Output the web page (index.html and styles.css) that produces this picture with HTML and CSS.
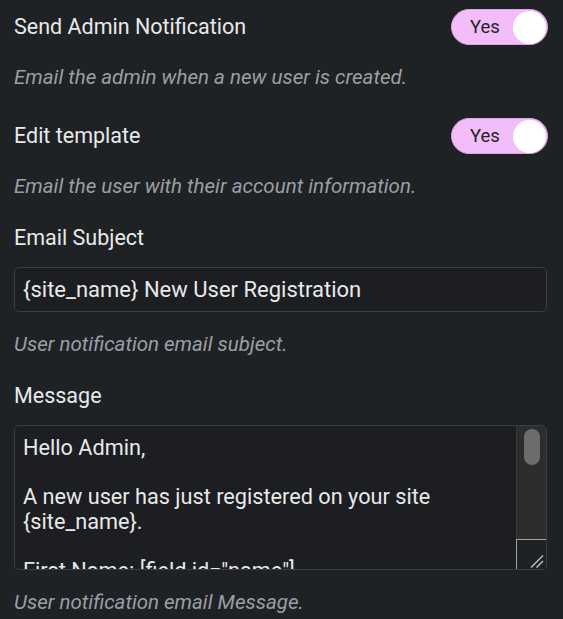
FILE: index.html
```html
<!DOCTYPE html>
<html lang="en">
<head>
    <meta charset="UTF-8">
    <title>User notification settings</title>
    <link rel="stylesheet" href="styles.css">
</head>
<body>

<div class="settings">
    <div class="field">
        <div class="field-row">
            <span class="field-label">Send Admin Notification</span>
            <label class="toggle">
                <span class="toggle-text">Yes</span>
                <span class="toggle-knob"></span>
            </label>
        </div>
        <p class="field-desc">Email the admin when a new user is created.</p>
    </div>

    <div class="field">
        <div class="field-row">
            <span class="field-label">Edit template</span>
            <label class="toggle">
                <span class="toggle-text">Yes</span>
                <span class="toggle-knob"></span>
            </label>
        </div>
        <p class="field-desc">Email the user with their account information.</p>
    </div>

    <div class="field">
        <label class="field-label block" for="subject">Email Subject</label>
        <input type="text" id="subject" class="text-input" value="{site_name} New User Registration">
        <p class="field-desc">User notification email subject.</p>
    </div>

    <div class="field">
        <label class="field-label block" for="message">Message</label>
        <div class="message-box">
            <textarea id="message" class="message-text">Hello Admin,

A new user has just registered on your site {site_name}.

First Name: [field id="name"]
Last Name: [field id="last_name"]
Email: [field id="email"]
Username: [field id="username"]

Please review the user role and details at 'Users' menu in your WP dashboard.

Thank You</textarea>
            <div class="scrollbar">
                <span class="scroll-thumb"></span>
                <span class="scroll-corner">
                    <svg width="14" height="14" viewBox="0 0 14 14">
                        <path d="M1 13.5 L13 1.5 M6.5 13.5 L13 7" stroke="#b3b3b3" stroke-width="1.6" fill="none"/>
                    </svg>
                </span>
            </div>
        </div>
        <p class="field-desc">User notification email Message.</p>
    </div>
</div>

</body>
</html>
```

FILE: styles.css
```css
body {
    margin: 0;
    background-color: #1f2225;
    font-family: Roboto, "Liberation Sans", sans-serif;
    color: #e8e9ea;
}

.settings {
    padding: 9px 16px 0 14px;
}

.field {
    margin-bottom: 30.5px;
}

.field-row {
    display: flex;
    align-items: center;
    justify-content: space-between;
    height: 36px;
}

.field-label {
    font-size: 21.5px;
    line-height: 22px;
}

.field-label.block {
    display: block;
    margin-bottom: 18px;
}

.field-desc {
    margin: 20.5px 0 0;
    font-size: 20.5px;
    line-height: 22px;
    font-style: italic;
    color: #9a9fa5;
}

.toggle {
    display: flex;
    align-items: center;
    justify-content: space-between;
    box-sizing: border-box;
    width: 97px;
    height: 36px;
    margin-right: -1px;
    padding: 0 1px 0 18px;
    background-color: #f3bdfa;
    border: 1px solid #dca6e4;
    border-radius: 18px;
    cursor: pointer;
}

.toggle-text {
    font-size: 18.5px;
    color: #232326;
}

.toggle-knob {
    width: 33px;
    height: 33px;
    border-radius: 50%;
    background-color: #fff;
}

.text-input {
    display: block;
    box-sizing: border-box;
    width: 100%;
    height: 45px;
    margin: 0;
    padding: 10px 8px;
    background-color: #1c1e21;
    border: 1px solid #3a3d41;
    border-radius: 5px;
    font-family: inherit;
    font-size: 22px;
    line-height: 24px;
    color: #e8e9ea;
    outline: none;
}

.message-box {
    display: flex;
    box-sizing: border-box;
    height: 145px;
    background-color: #1c1e21;
    border: 1px solid #3a3d41;
    border-radius: 5px;
    overflow: hidden;
}

.message-text {
    flex: 1;
    margin: 0;
    padding: 10px 8px 0 8px;
    background: transparent;
    border: none;
    resize: none;
    overflow: hidden;
    font-family: inherit;
    font-size: 21.7px;
    line-height: 24.5px;
    color: #e8e9ea;
    outline: none;
}

.scrollbar {
    display: flex;
    flex-direction: column;
    width: 29px;
    background-color: #2d2d2e;
    border-left: 1px solid #38393a;
}

.scroll-thumb {
    height: 36px;
    margin: 3px 6px 0 7px;
    border-radius: 8px;
    background-color: #6c6c6c;
}

.scroll-corner {
    display: flex;
    align-items: flex-end;
    justify-content: flex-end;
    box-sizing: border-box;
    height: 30px;
    margin-top: auto;
    margin-left: -1px;
    padding: 0 2px 1px 0;
    background-color: #1f2225;
    border-top: 1px solid #a3a3a3;
    border-left: 1px solid #a3a3a3;
}
```
